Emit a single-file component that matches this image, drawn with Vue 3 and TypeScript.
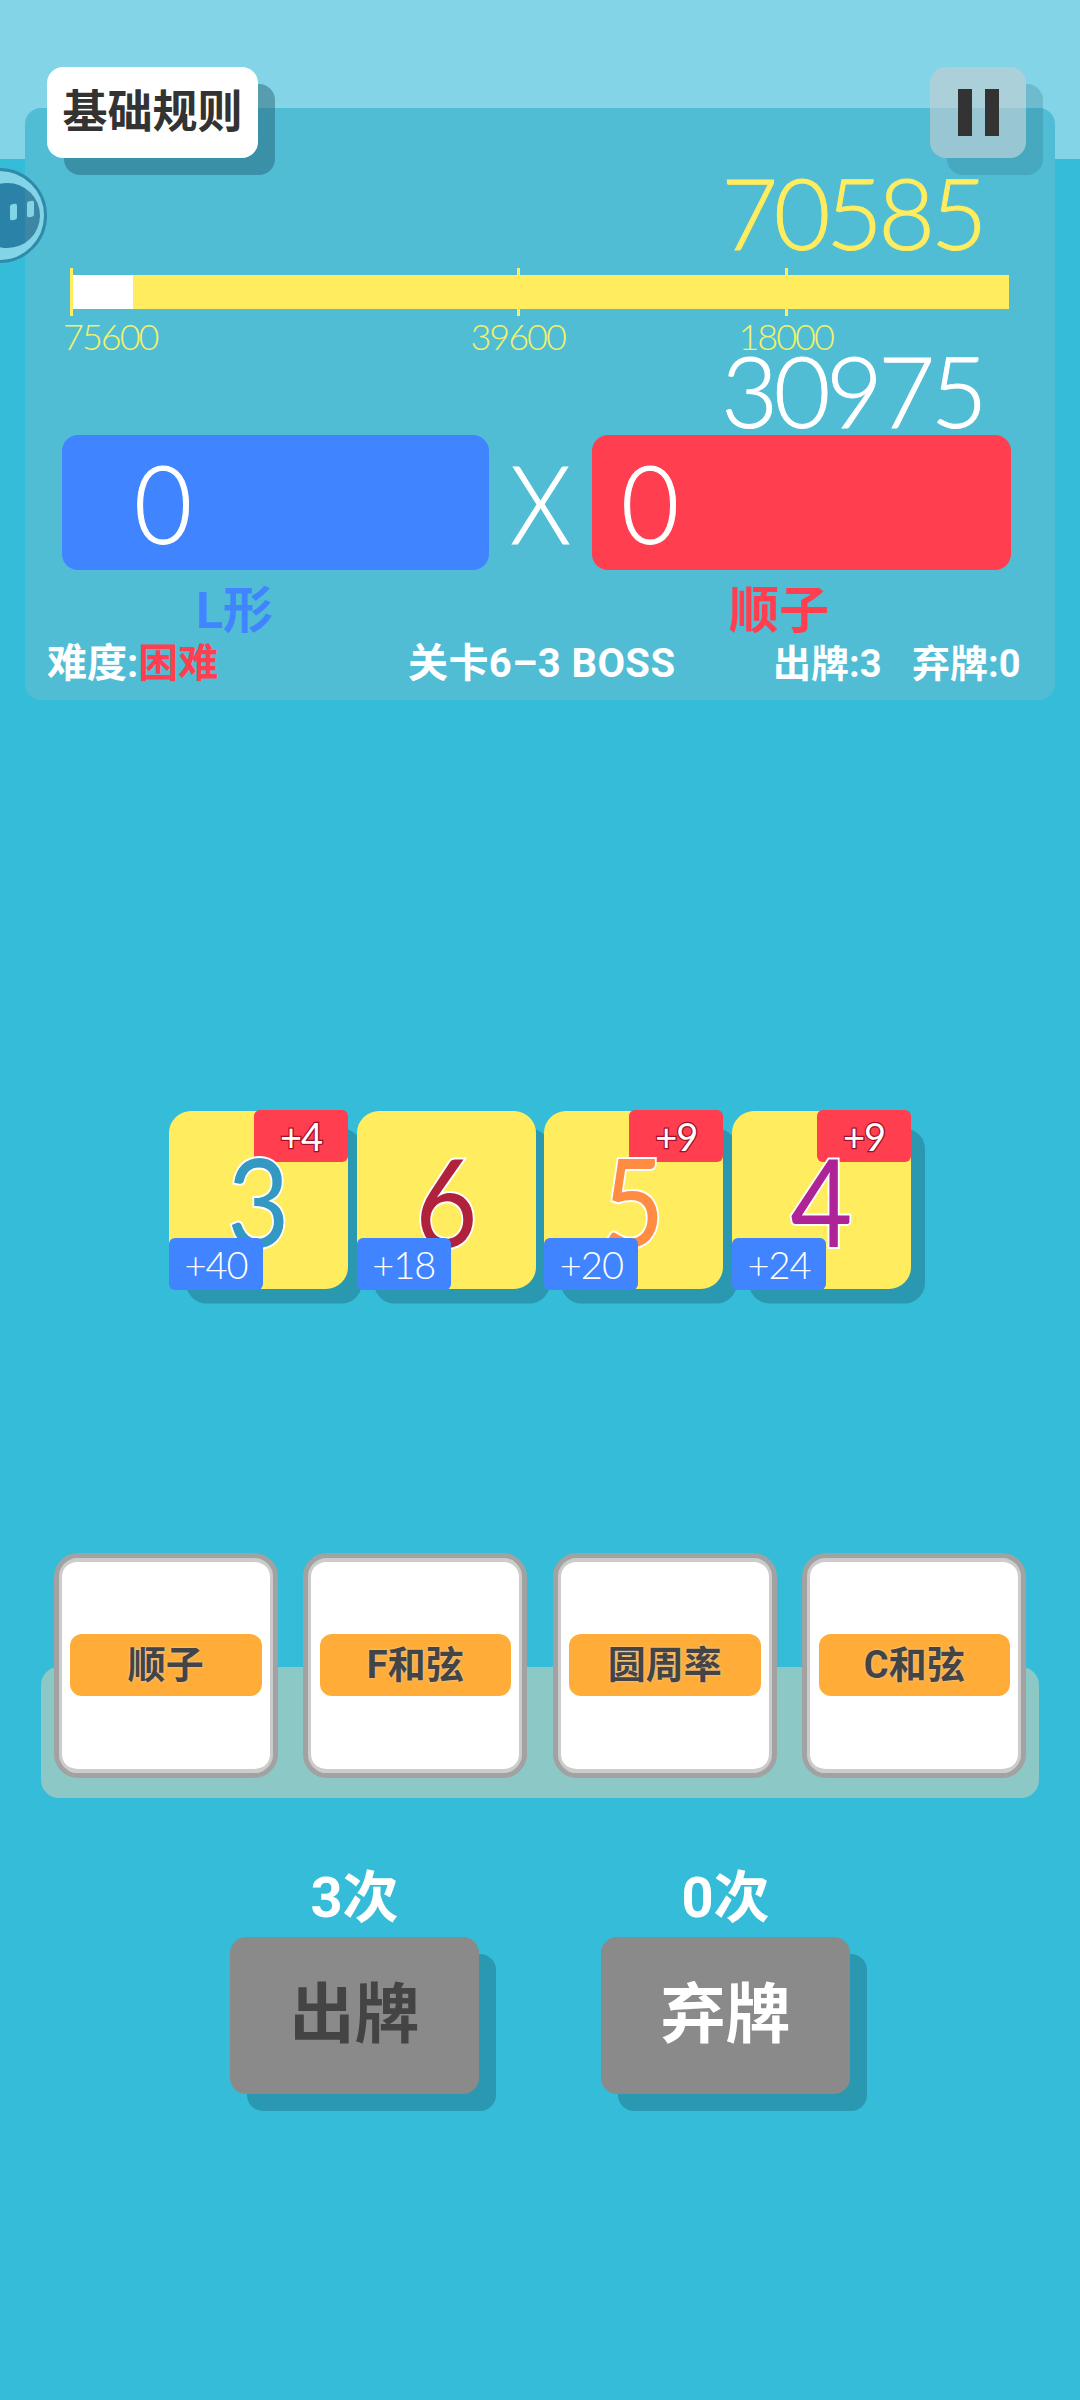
<script setup lang="ts">
const maxScore = 75600
const current = 70585
const barWidth = 938
const xFor = (v: number) => barWidth - (v / maxScore) * barWidth
const ticks = [75600, 39600, 18000].map((v, i) => ({ v, first: i === 0, left: xFor(v) + 'px' }))
const whiteWidth = xFor(current) + 'px'
const cards = [
  { n: '3', color: '#3399c2', top: '+4', bottom: '+40' },
  { n: '6', color: '#b0213c', top: '', bottom: '+18' },
  { n: '5', color: '#ff8c42', top: '+9', bottom: '+20' },
  { n: '4', color: '#ae2496', top: '+9', bottom: '+24' },
]
const jokers = ['顺子', 'F和弦', '圆周率', 'C和弦']
</script>

<template>
  <div class="page">
    <div class="band"></div>
    <section class="panel">
      <div class="top-row">
        <button class="rules">基础规则</button>
        <button class="pause"><span></span><span></span></button>
      </div>
      <div class="score yellow">{{ current }}</div>
      <div class="bar">
        <div class="bar-white" :style="{ width: whiteWidth }"></div>
        <div v-for="t in ticks" :key="t.v" class="tick" :style="{ left: t.left }">
          <span class="tick-label" :class="{ first: t.first }">{{ t.v }}</span>
        </div>
      </div>
      <div class="score white second">30975</div>
      <div class="calc">
        <div class="box blue-box"><span class="big">0</span></div>
        <div class="times"><span class="x">X</span></div>
        <div class="box red-box"><span class="big">0</span></div>
      </div>
      <div class="types">
        <span class="type-l">L形</span>
        <span class="type-r">顺子</span>
      </div>
      <div class="info">
        <span class="info-a">难度:<em>困难</em></span>
        <span class="info-b">关卡6–3 BOSS</span>
        <span class="info-c">出牌:3</span>
        <span class="info-d">弃牌:0</span>
      </div>
    </section>

    <section class="hand">
      <div v-for="(c, i) in cards" :key="i" class="card">
        <span v-if="c.top" class="badge badge-top">{{ c.top }}</span>
        <span class="digit" :style="{ color: c.color }">{{ c.n }}</span>
        <span class="badge badge-bottom">{{ c.bottom }}</span>
      </div>
    </section>

    <section class="tray">
      <div class="jokers">
        <div v-for="j in jokers" :key="j" class="joker">
          <div class="joker-label">{{ j }}</div>
        </div>
      </div>
    </section>

    <section class="actions">
      <div class="action">
        <div class="count">3次</div>
        <button class="act-btn dark">出牌</button>
      </div>
      <div class="action">
        <div class="count">0次</div>
        <button class="act-btn light">弃牌</button>
      </div>
    </section>

    <div class="ball">
      <div class="ball-face">
        <i class="eye eye-a"></i>
        <i class="eye eye-b"></i>
      </div>
    </div>
  </div>
</template>

<style>
html, body { margin: 0; padding: 0; }
</style>

<style scoped>
.page {
  position: relative;
  width: 1080px;
  height: 2400px;
  overflow: hidden;
  background: #35bcd8;
  padding-top: 108px;
  box-sizing: border-box;
  font-family: Roboto, "Noto Sans CJK SC", sans-serif;
}
.band {
  position: absolute;
  left: 0;
  top: 0;
  width: 100%;
  height: 159px;
  background: #83d4e6;
}
.panel {
  position: relative;
  display: flow-root;
  width: 1030px;
  height: 592px;
  margin-left: 25px;
  background: #50bdd5;
  border-radius: 16px;
}
.top-row {
  display: flex;
  justify-content: space-between;
  padding: 0 29px 0 22px;
  margin-top: -41px;
  height: 91px;
}
button {
  border: 0;
  padding: 0;
  font-family: inherit;
}
.rules {
  width: 211px;
  height: 91px;
  padding-bottom: 8px;
  background: #fff;
  color: #333;
  border-radius: 16px;
  font-size: 45px;
  font-weight: 700;
  box-shadow: 17px 17px 0 rgba(30, 90, 110, 0.45);
}
.pause {
  width: 96px;
  height: 91px;
  display: flex;
  justify-content: center;
  align-items: center;
  gap: 13px;
  border-radius: 16px;
  background: rgba(200, 205, 210, 0.6);
  box-shadow: 17px 17px 0 rgba(30, 90, 110, 0.2);
}
.pause span {
  width: 14px;
  height: 47px;
  background: #333;
}
.score {
  font-family: Lato, sans-serif;
  font-weight: 300;
  font-size: 98px;
  line-height: 90px;
  letter-spacing: -4.5px;
  -webkit-text-stroke: 1px currentColor;
  text-align: right;
  padding-right: 72px;
  height: 90px;
}
.yellow { color: #ffec5f; margin-top: 9px; }
.white { color: #fff; }
.bar {
  position: relative;
  width: 938px;
  height: 34px;
  margin: 18px 0 0 46px;
  background: #ffec5f;
}
.bar-white {
  height: 100%;
  background: #fff;
}
.tick {
  position: absolute;
  top: -7px;
  width: 3px;
  height: 48px;
  margin-left: -1px;
  background: #ffec5f;
}
.tick-label {
  position: absolute;
  top: 50px;
  left: 1px;
  transform: translateX(-50%);
  font-family: Lato, sans-serif;
  font-weight: 300;
  font-size: 36px;
  line-height: 36px;
  letter-spacing: -2px;
  color: #f2f26a;
}
.tick-label.first {
  left: -7px;
  transform: none;
}
.second { margin-top: 36px; }
.calc {
  display: flex;
  padding-left: 37px;
  height: 135px;
}
.box {
  height: 135px;
  border-radius: 16px;
  display: flex;
  align-items: center;
  color: #fff;
}
.blue-box { width: 427px; background: #4084ff; padding-left: 72px; box-sizing: border-box; }
.red-box { width: 419px; background: #ff3e50; padding-left: 29px; box-sizing: border-box; }
.big, .x {
  display: block;
  font-family: Lato, sans-serif;
  font-weight: 300;
  font-size: 108px;
  line-height: 135px;
  color: #fff;
  -webkit-text-stroke: 1px #fff;
  transform-origin: left center;
  transform: scaleX(0.93);
}
.x {
  transform-origin: center;
  transform: scaleX(0.9);
}
.times {
  width: 103px;
  text-align: center;
}
.types {
  display: flex;
  height: 72px;
  padding-left: 171px;
  align-items: center;
  font-weight: 700;
  font-size: 50px;
}
.type-l { color: #4084ff; width: 533px; margin-top: 0; }
.type-r { color: #ff3e50; font-size: 50px; margin-top: 0; }
.info {
  display: flex;
  align-items: center;
  height: 40px;
  margin-top: -2px;
  padding-left: 22px;
  color: #fff;
  font-size: 38px;
  font-weight: 700;
}
.info em { color: #ff3e50; font-style: normal; }
.info-a { width: 361px; font-size: 40px; }
.info-b { width: 365px; font-size: 40px; letter-spacing: 0.4px; }
.info-c { width: 139px; }

.hand {
  display: flex;
  gap: 8.7px;
  padding-left: 169px;
  margin-top: 411px;
}
.card {
  position: relative;
  width: 179px;
  height: 178px;
  border-radius: 22px;
  background: #ffec5f;
  box-shadow: 15.5px 16px 0 -1.5px #2a98b0;
  display: flex;
  align-items: center;
  justify-content: center;
}
.digit {
  display: block;
  font-family: Lato, sans-serif;
  font-weight: 400;
  font-size: 122px;
  line-height: 178px;
  -webkit-text-stroke: 4px #fff;
  paint-order: stroke fill;
  position: relative;
  z-index: 1;
  transform: scaleX(0.88);
}
.badge {
  position: absolute;
  width: 94px;
  height: 52px;
  border-radius: 6px;
  display: flex;
  align-items: center;
  justify-content: center;
  color: #fff;
  font-family: Lato, sans-serif;
  font-size: 38px;
  line-height: 52px;
  letter-spacing: -1px;
}
.badge-top {
  top: -1px;
  right: 0;
  background: #ff3e50;
  -webkit-text-stroke: 2.5px #a00f25;
  paint-order: stroke fill;
  font-weight: 400;
}
.badge-bottom {
  bottom: -1px;
  left: 0;
  background: #4084ff;
  z-index: 2;
  font-weight: 300;
}

.tray {
  width: 998px;
  height: 131px;
  margin: 378px 0 0 41px;
  background: #8bc8c6;
  border-radius: 18px;
}
.jokers {
  display: flex;
  gap: 25.5px;
  padding-left: 12.5px;
  position: relative;
  top: -114px;
}
.joker {
  width: 224px;
  height: 225px;
  box-sizing: border-box;
  flex: none;
  background: #fff;
  border: 5px solid #a2a2a2;
  border-radius: 24px;
  box-shadow: inset 0 0 0 3px #ccc, inset 0 4px 0 #ccc, inset 0 -4px 0 #ccc;
  padding: 76px 11px 0 11.5px;
}
.joker-label {
  height: 62px;
  padding-bottom: 7px;
  box-sizing: border-box;
  border-radius: 12px;
  background: #ffad38;
  display: flex;
  align-items: center;
  justify-content: center;
  color: #444;
  font-size: 38px;
  font-weight: 700;
  text-shadow: 0 0 2px #ddd;
}
.actions {
  display: flex;
  gap: 122px;
  padding-left: 230px;
  margin-top: 72px;
}
.action {
  width: 249px;
}
.count {
  height: 67px;
  line-height: 56px;
  text-align: center;
  font-size: 56px;
  font-weight: 700;
  color: #fff;
}
.act-btn {
  display: block;
  width: 249px;
  height: 157px;
  padding-bottom: 14px;
  border-radius: 16px;
  background: #8a8a8a;
  box-shadow: 17px 17px 0 #2a98b0;
  font-size: 65px;
  font-weight: 700;
}
.dark { color: #444; }
.light { color: #fff; }

.ball {
  position: absolute;
  left: -48px;
  top: 168px;
  width: 95px;
  height: 95px;
  box-sizing: border-box;
  border: 3px solid #2f8aab;
  border-radius: 50%;
  background: #83d4e6;
  display: flex;
  align-items: center;
  justify-content: center;
}
.ball-face {
  position: relative;
  width: 65px;
  height: 65px;
  margin-left: 16px;
  border-radius: 50%;
  background: linear-gradient(90deg, #2a82a8 50px, #3d86a4 50px);
}
.eye {
  position: absolute;
  width: 7px;
  height: 16px;
  background: #83d4e6;
  border-radius: 2px;
  transform: skewY(-8deg);
}
.eye-a { left: 35px; top: 21px; }
.eye-b { left: 52px; top: 18px; }
</style>
